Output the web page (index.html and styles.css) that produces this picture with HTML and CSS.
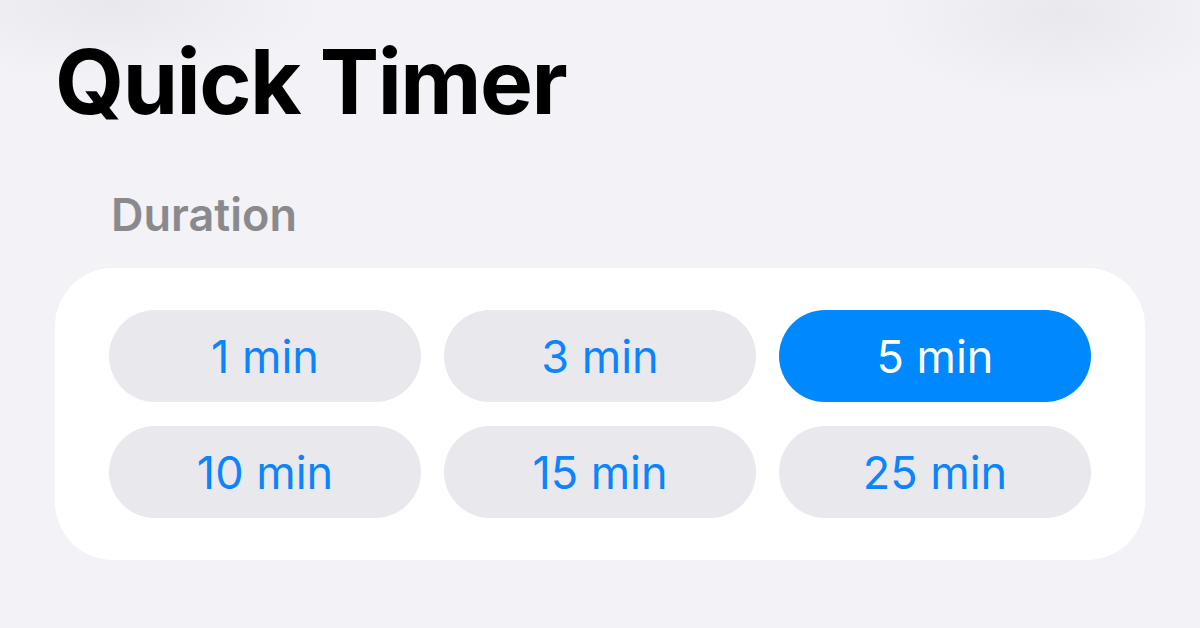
FILE: index.html
```html
<!DOCTYPE html>
<html lang="en">
<head>
<meta charset="utf-8">
<title>Quick Timer</title>
<link rel="stylesheet" href="styles.css">
</head>
<body>
<div class="screen">
  <div class="glow glow-left"></div>
  <div class="glow glow-right"></div>
  <h1 class="title">Quick Timer</h1>
  <section class="section">
    <h2 class="section-label">Duration</h2>
    <div class="card">
      <div class="grid">
        <button class="chip">1 min</button>
        <button class="chip">3 min</button>
        <button class="chip chip-selected">5 min</button>
        <button class="chip">10 min</button>
        <button class="chip">15 min</button>
        <button class="chip">25 min</button>
      </div>
    </div>
  </section>
</div>
</body>
</html>
```

FILE: styles.css
```css
* { box-sizing: border-box; }
html, body {
  margin: 0;
  padding: 0;
  background: #f2f2f7;
}
body {
  font-family: Inter, "Noto Sans", "Liberation Sans", sans-serif;
  width: 1200px;
  height: 628px;
  overflow: hidden;
}
.screen {
  position: relative;
  width: 1200px;
  height: 628px;
  padding: 0 55px;
}
.glow {
  position: absolute;
  top: -70px;
  width: 420px;
  height: 150px;
  border-radius: 50%;
  background: radial-gradient(ellipse at center, rgba(222,222,228,0.5) 0%, rgba(230,230,236,0.3) 45%, rgba(242,242,247,0) 72%);
  pointer-events: none;
}
.glow-left { left: -100px; }
.glow-right { right: -40px; width: 360px; height: 170px; }
.title {
  position: relative;
  margin: 0;
  padding: 32px 0 0 0;
  font-size: 89px;
  font-weight: 700;
  line-height: 100px;
  letter-spacing: -1.5px;
  color: #000;
}
.section-label {
  margin: 0;
  padding: 58px 0 0 56px;
  font-size: 45px;
  font-weight: 600;
  line-height: 50px;
  color: #8a8a8e;
  letter-spacing: 0;
}
.card {
  margin-top: 28px;
  background: #fff;
  border-radius: 58px;
  padding: 42px 54px 42px 54px;
}
.grid {
  display: grid;
  grid-template-columns: repeat(3, 1fr);
  column-gap: 23px;
  row-gap: 24px;
}
.chip {
  height: 92px;
  border: 0;
  border-radius: 46px;
  background: #e8e8ed;
  color: #0a84ff;
  font-family: Inter, "Noto Sans", "Liberation Sans", sans-serif;
  font-size: 45px;
  font-weight: 400;
  padding: 0;
  letter-spacing: 0;
}
.chip-selected {
  background: #0088ff;
  color: #fff;
}
```
